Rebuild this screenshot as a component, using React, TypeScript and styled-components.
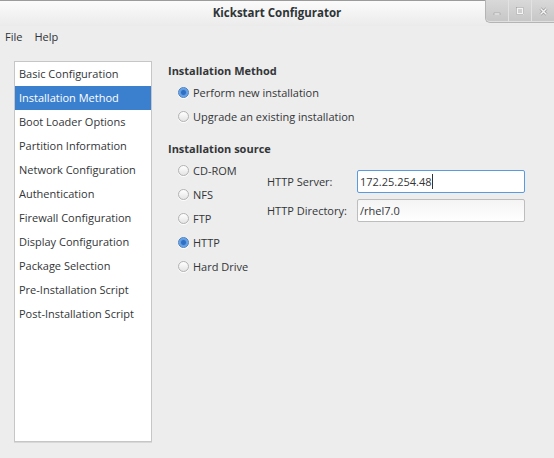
import { createGlobalStyle, styled } from 'styled-components';

const GlobalStyle = createGlobalStyle`
  html, body {
    margin: 0;
    padding: 0;
    background: #ededed;
  }
  body {
    font-family: 'Open Sans', 'DejaVu Sans', sans-serif;
    font-size: 11px;
    color: #333638;
  }
`;

const sections = [
  'Basic Configuration',
  'Installation Method',
  'Boot Loader Options',
  'Partition Information',
  'Network Configuration',
  'Authentication',
  'Firewall Configuration',
  'Display Configuration',
  'Package Selection',
  'Pre-Installation Script',
  'Post-Installation Script',
];

const sources = ['CD-ROM', 'NFS', 'FTP', 'HTTP', 'Hard Drive'];

const Window = styled.div`
  width: 554px;
  height: 458px;
  background: #ededed;
  display: flex;
  flex-direction: column;
  overflow: hidden;
`;

const TitleBar = styled.div`
  box-sizing: border-box;
  height: 26px;
  border-top: 1px solid #9b9b9b;
  background: linear-gradient(#fbfbfb, #ebebeb);
  display: grid;
  grid-template-columns: 1fr auto 1fr;
  align-items: start;
`;

const Title = styled.div`
  grid-column: 2;
  font-weight: 700;
  font-size: 11.5px;
  line-height: 24px;
  color: #2e3436;
`;

const Controls = styled.div`
  grid-column: 3;
  justify-self: end;
  display: flex;
  height: 22px;
  margin-top: -1px;
  border: 1px solid #b4b4b4;
  border-top: none;
  border-right: none;
  border-bottom-left-radius: 5px;
  background: linear-gradient(#d9d9d9, #c6c6c6);
  box-shadow: inset 0 -1px 0 #e0e0e0;
`;

const ControlButton = styled.div`
  width: 22px;
  display: flex;
  align-items: center;
  justify-content: center;
  & + & {
    border-left: 1px solid #e2e2e2;
  }
  svg {
    display: block;
  }
`;

const MenuBar = styled.div`
  display: flex;
  gap: 12px;
  padding: 2px 5px 2px;
  height: 18px;
  line-height: 18px;
`;

const MenuItem = styled.span`
  color: #2e3436;
`;

const Body = styled.div`
  flex: 1;
  display: flex;
  padding: 13px 14px 16px 14px;
  min-height: 0;
`;

const Sidebar = styled.ul`
  box-sizing: border-box;
  width: 138px;
  margin: 0;
  padding: 0;
  list-style: none;
  background: #ffffff;
  border: 1px solid #c6c6c6;
  box-shadow: 0 1px 0 #d8d8d8;
`;

const SidebarItem = styled.li<{ $active?: boolean }>`
  height: 24px;
  line-height: 24px;
  padding-left: 4px;
  white-space: nowrap;
  background: ${({ $active }) => ($active ? '#3b80cf' : 'transparent')};
  color: ${({ $active }) => ($active ? '#ffffff' : '#333638')};
`;

const Content = styled.div`
  margin-left: 16px;
  padding-top: 2px;
  display: flex;
  flex-direction: column;
`;

const Heading = styled.div<{ $gap?: number }>`
  font-weight: 700;
  line-height: 16px;
  margin-top: ${({ $gap }) => $gap ?? 0}px;
  margin-bottom: 1px;
`;

const RadioGroup = styled.div`
  display: flex;
  flex-direction: column;
  padding-left: 10px;
`;

const RadioRow = styled.label`
  display: flex;
  align-items: center;
  gap: 4px;
  height: 24px;
  white-space: nowrap;
`;

const RadioDot = styled.span<{ $checked?: boolean }>`
  box-sizing: border-box;
  width: 11px;
  height: 11px;
  border-radius: 50%;
  border: 1px solid ${({ $checked }) => ($checked ? '#4a7fc0' : '#b3b3b3')};
  background: ${({ $checked }) =>
    $checked
      ? 'radial-gradient(circle at 50% 50%, #2f6fc4 0 2px, #5d9be2 3px, #8bbbef 6px)'
      : 'linear-gradient(#ffffff, #e4e4e4)'};
  box-shadow: 0 1px 0 rgba(255, 255, 255, 0.8);
`;

const SourceRow = styled.div`
  display: flex;
`;

const SourceList = styled(RadioGroup)`
  width: 89px;
`;

const FieldGrid = styled.div`
  display: grid;
  grid-template-columns: 90px 168px;
  row-gap: 6px;
  align-items: center;
  margin-top: 12px;
  align-self: flex-start;
`;

const FieldLabel = styled.span`
  white-space: nowrap;
`;

const TextInput = styled.div<{ $focused?: boolean }>`
  box-sizing: border-box;
  height: 23px;
  line-height: 21px;
  padding: 0 2px;
  border: 1px solid ${({ $focused }) => ($focused ? '#5a9ae0' : '#bdbdbd')};
  border-radius: 2px;
  background: ${({ $focused }) => ($focused ? '#ffffff' : 'linear-gradient(#f4f4f4, #ffffff)')};
  color: #333638;
  white-space: nowrap;
`;

const Caret = styled.span`
  display: inline-block;
  width: 1px;
  height: 15px;
  background: #2e3436;
  vertical-align: -3px;
`;

const Radio = ({ label, checked }: { label: string; checked?: boolean }) => (
  <RadioRow>
    <RadioDot $checked={checked} />
    <span>{label}</span>
  </RadioRow>
);

export default function App() {
  return (
    <>
      <GlobalStyle />
      <Window>
        <TitleBar>
          <Title>Kickstart Configurator</Title>
          <Controls>
            <ControlButton>
              <svg width="8" height="8" viewBox="0 0 8 8">
                <rect x="1" y="6" width="6" height="2" fill="#f4f4f4" stroke="#8d8d8d" strokeWidth="0.5" />
              </svg>
            </ControlButton>
            <ControlButton>
              <svg width="8" height="8" viewBox="0 0 8 8">
                <rect x="1" y="1" width="6" height="6" fill="none" stroke="#f4f4f4" strokeWidth="2" />
                <rect x="0.5" y="0.5" width="7" height="7" fill="none" stroke="#8d8d8d" strokeWidth="0.5" />
              </svg>
            </ControlButton>
            <ControlButton>
              <svg width="9" height="9" viewBox="0 0 9 9">
                <path d="M1.5 1.5 L7.5 7.5 M7.5 1.5 L1.5 7.5" stroke="#8d8d8d" strokeWidth="2.6" />
                <path d="M1.5 1.5 L7.5 7.5 M7.5 1.5 L1.5 7.5" stroke="#f4f4f4" strokeWidth="1.6" />
              </svg>
            </ControlButton>
          </Controls>
        </TitleBar>
        <MenuBar>
          <MenuItem>File</MenuItem>
          <MenuItem>Help</MenuItem>
        </MenuBar>
        <Body>
          <Sidebar>
            {sections.map((s) => (
              <SidebarItem key={s} $active={s === 'Installation Method'}>
                {s}
              </SidebarItem>
            ))}
          </Sidebar>
          <Content>
            <Heading>Installation Method</Heading>
            <RadioGroup>
              <Radio label="Perform new installation" checked />
              <Radio label="Upgrade an existing installation" />
            </RadioGroup>
            <Heading $gap={13}>Installation source</Heading>
            <SourceRow>
              <SourceList>
                {sources.map((s) => (
                  <Radio key={s} label={s} checked={s === 'HTTP'} />
                ))}
              </SourceList>
              <FieldGrid>
                <FieldLabel>HTTP Server:</FieldLabel>
                <TextInput $focused>
                  172.25.254.48
                  <Caret />
                </TextInput>
                <FieldLabel>HTTP Directory:</FieldLabel>
                <TextInput>/rhel7.0</TextInput>
              </FieldGrid>
            </SourceRow>
          </Content>
        </Body>
      </Window>
    </>
  );
}
